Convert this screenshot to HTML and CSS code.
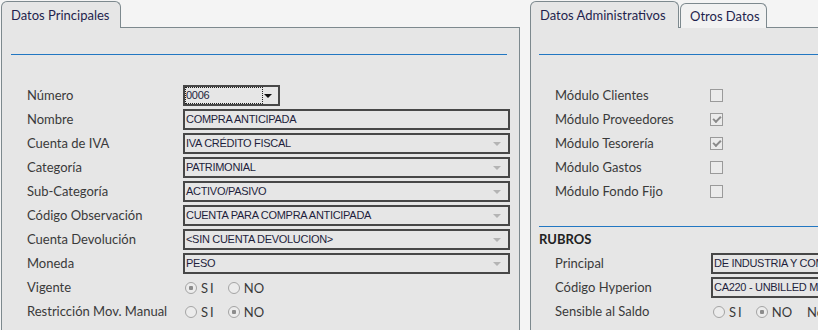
FILE: index.html
```html
<!DOCTYPE html>
<html lang="es">

<head>
    <meta charset="UTF-8">
    <meta name="viewport" content="width=device-width, initial-scale=1.0">
    <title>Cuenta</title>
    <link rel="stylesheet" href="styles.css">
</head>

<body>

    <div class="screen">

        <!-- Datos Principales -->
        <section class="panel panel-main">
            <div class="tabs">
                <div class="tab active">Datos Principales</div>
            </div>
            <div class="panel-body">
                <div class="rule"></div>

                <div class="form">
                    <label>Número</label>
                    <div class="combo combo-num"><span class="focus-box">0006</span></div>

                    <label>Nombre</label>
                    <div class="field">COMPRA ANTICIPADA</div>

                    <label>Cuenta de IVA</label>
                    <div class="combo">IVA CRÉDITO FISCAL</div>

                    <label>Categoría</label>
                    <div class="combo">PATRIMONIAL</div>

                    <label>Sub-Categoría</label>
                    <div class="combo">ACTIVO/PASIVO</div>

                    <label>Código Observación</label>
                    <div class="combo">CUENTA PARA COMPRA ANTICIPADA</div>

                    <label>Cuenta Devolución</label>
                    <div class="combo">&lt;SIN CUENTA DEVOLUCION&gt;</div>

                    <label>Moneda</label>
                    <div class="combo">PESO</div>

                    <label>Vigente</label>
                    <div class="radios">
                        <span class="radio"><i class="dot checked"></i>SI</span>
                        <span class="radio"><i class="dot"></i>NO</span>
                    </div>

                    <label>Restricción Mov. Manual</label>
                    <div class="radios">
                        <span class="radio"><i class="dot"></i>SI</span>
                        <span class="radio"><i class="dot checked"></i>NO</span>
                    </div>
                </div>
            </div>
        </section>

        <!-- Datos Administrativos -->
        <section class="panel panel-admin">
            <div class="tabs">
                <div class="tab active">Datos Administrativos</div>
                <div class="tab">Otros Datos</div>
            </div>
            <div class="panel-body">
                <div class="rule"></div>

                <div class="form form-admin">
                    <label>Módulo Clientes</label>
                    <div><span class="check"></span></div>

                    <label>Módulo Proveedores</label>
                    <div><span class="check checked"></span></div>

                    <label>Módulo Tesorería</label>
                    <div><span class="check checked"></span></div>

                    <label>Módulo Gastos</label>
                    <div><span class="check"></span></div>

                    <label>Módulo Fondo Fijo</label>
                    <div><span class="check"></span></div>
                </div>

                <div class="rule rule-rubros"></div>
                <h3 class="section-title">RUBROS</h3>

                <div class="form form-admin">
                    <label>Principal</label>
                    <div class="field field-wide">DE INDUSTRIA Y COMERCIO</div>

                    <label>Código Hyperion</label>
                    <div class="field field-wide">CA220 - UNBILLED MERCHANDISE</div>

                    <label>Sensible al Saldo</label>
                    <div class="radios radios-admin">
                        <span class="radio"><i class="dot"></i>SI</span>
                        <span class="radio"><i class="dot checked"></i>NO</span>
                        <span class="note">No</span>
                    </div>
                </div>
            </div>
        </section>

    </div>

</body>

</html>
```

FILE: styles.css
```css
body {
    margin: 0;
    background-color: #f4f4f4;
    font-family: Lato, "Open Sans", sans-serif;
    font-size: 13px;
    color: #3a3a3a;
    overflow: hidden;
}

.screen {
    display: flex;
    gap: 10px;
    padding: 1px 0 0 1px;
}

.panel-main {
    width: 519px;
    flex-shrink: 0;
}

.panel-admin {
    width: 420px;
    flex-shrink: 0;
}

/* pestañas */
.tabs {
    display: flex;
    align-items: flex-end;
}

.tab {
    position: relative;
    box-sizing: border-box;
    height: 25px;
    margin-bottom: -1px;
    padding: 0 9px;
    border: 1px solid #7d898e;
    border-bottom: none;
    border-radius: 6px 6px 0 0;
    background-color: #f2f2f2;
    color: #1f1f4d;
    line-height: 25px;
    white-space: nowrap;
}

.tab.active {
    height: 27px;
    background-color: #e6e6e6;
    line-height: 27px;
    z-index: 1;
}

.panel-main .tab.active {
    width: 120px;
}

.panel-admin .tab.active {
    width: 149px;
}

.panel-admin .tab + .tab {
    width: 87px;
    margin-left: 1px;
}

.panel-body {
    box-sizing: border-box;
    height: 330px;
    padding: 26px 12px 0 9px;
    border: 1px solid #7d898e;
    border-bottom: none;
    background-color: #e6e6e6;
}

.panel-admin .panel-body {
    padding-left: 8px;
}

.rule {
    height: 1px;
    margin-bottom: 30px;
    background-color: #2277c2;
}

/* formulario */
.form {
    display: grid;
    grid-template-columns: 156px 327px;
    grid-auto-rows: 21px;
    row-gap: 3px;
    align-items: center;
    margin-left: 16px;
}

.form-admin {
    grid-template-columns: 156px auto;
}

.form label {
    margin-top: -2px;
    white-space: nowrap;
}

.field,
.combo {
    position: relative;
    box-sizing: border-box;
    height: 21px;
    padding-left: 1px;
    border: 2px solid #474747;
    font-family: "Liberation Sans", Arial, sans-serif;
    font-size: 11px;
    letter-spacing: -0.3px;
    line-height: 17px;
    color: #1e1e3c;
    white-space: nowrap;
    overflow: hidden;
}

.field-wide {
    width: 160px;
    border-right: none;
}

.combo::after {
    content: "";
    position: absolute;
    right: 7px;
    top: 7px;
    border-left: 4px solid transparent;
    border-right: 4px solid transparent;
    border-top: 4px solid #b4b4b4;
}

.combo-num {
    width: 97px;
    padding-left: 0;
}

.combo-num::after {
    right: 6px;
    border-top-color: #111;
}

.focus-box {
    display: block;
    box-sizing: border-box;
    width: 78px;
    height: 17px;
    border: 1px dotted #222;
    line-height: 15px;
}

/* radios */
.radios {
    display: flex;
    align-items: center;
    padding-left: 2px;
}

.radio {
    display: flex;
    align-items: center;
    gap: 4px;
    margin-right: 12px;
    letter-spacing: 2px;
}

.radio + .radio {
    letter-spacing: 0;
}

.dot {
    box-sizing: border-box;
    width: 12px;
    height: 12px;
    border: 1px solid #a4a4a4;
    border-radius: 50%;
    background-color: #ececec;
}

.dot.checked {
    background: radial-gradient(circle, #8c8c8c 0 2px, #ececec 2.5px);
}

.note {
    margin-left: 3px;
}

/* checks */
.check {
    display: block;
    box-sizing: border-box;
    width: 13px;
    height: 13px;
    margin-left: -1px;
    border: 1px solid #9a9a9a;
    background-color: #ebebeb;
}

.check.checked::after {
    content: "";
    display: block;
    width: 6px;
    height: 3px;
    margin: 2px 0 0 2px;
    border-left: 2px solid #8a8a8a;
    border-bottom: 2px solid #8a8a8a;
    transform: rotate(-45deg);
}

.rule-rubros {
    margin: 24px 0 0 0;
}

.section-title {
    margin: 0;
    height: 26px;
    font-size: 13px;
    line-height: 25px;
    color: #222;
}
```
